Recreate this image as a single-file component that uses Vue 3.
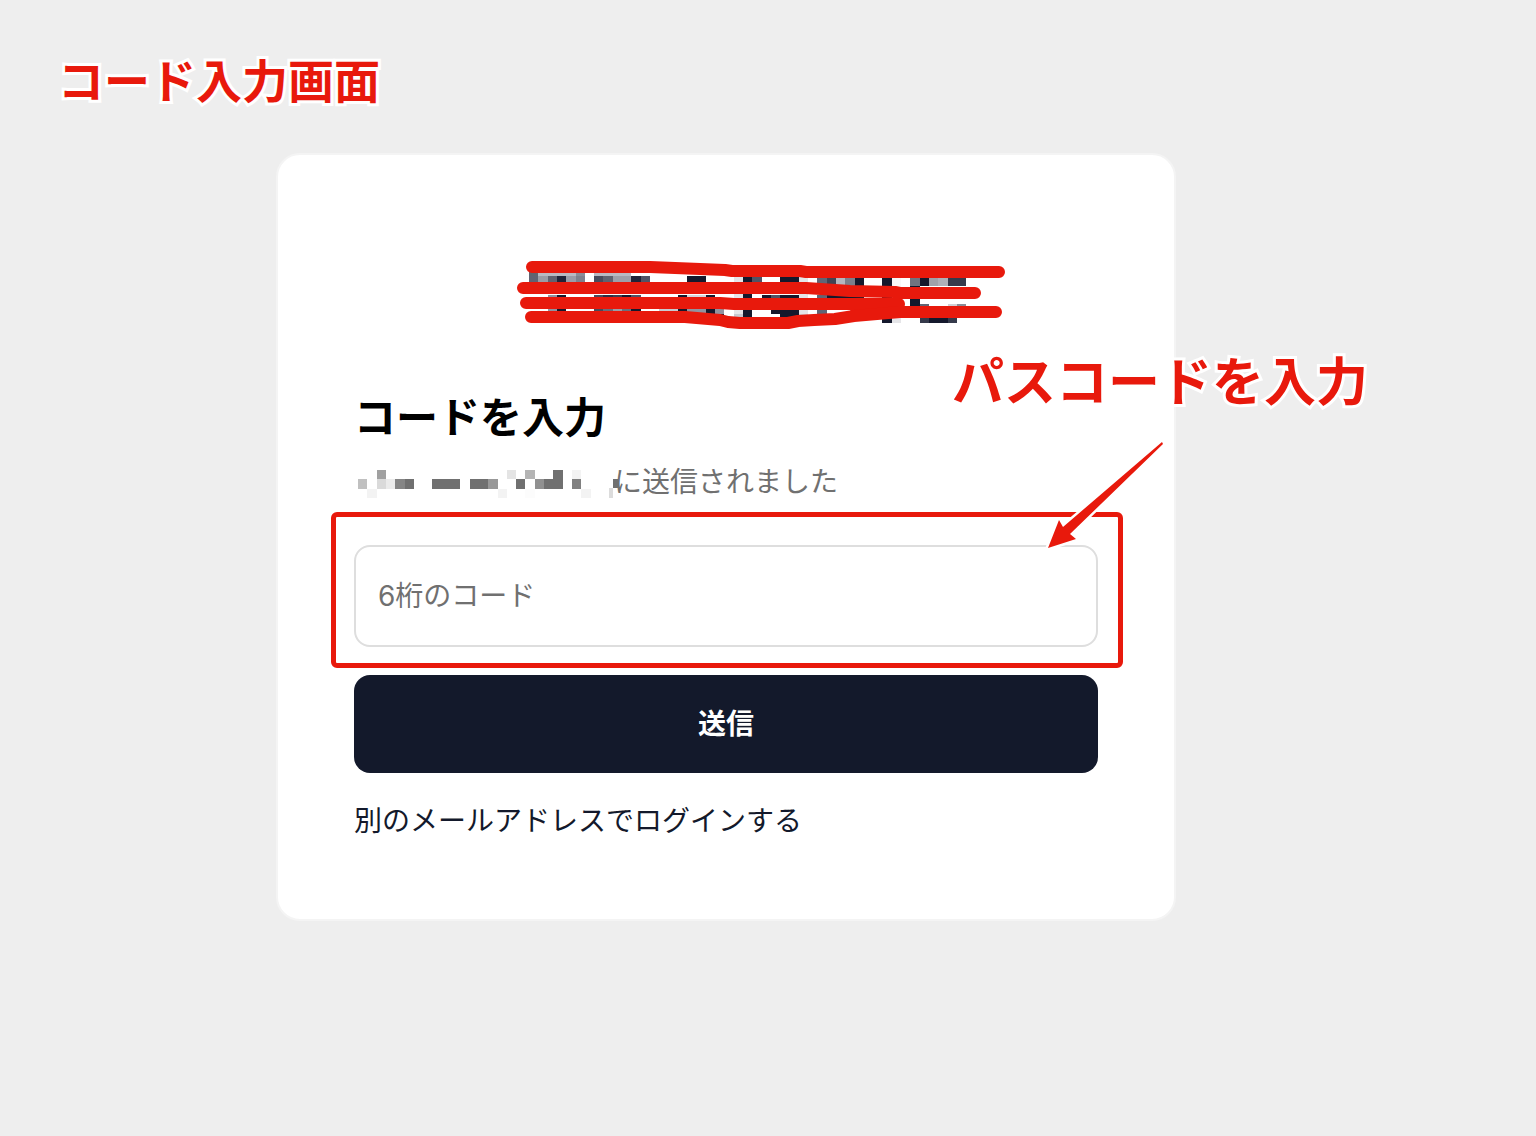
<script setup>
import { ref } from 'vue'

const code = ref('')

const N = '#14182c'

// Mosaic cells: [column, row, colour, columns wide, rows high]
const logoCells = [
  [0, 0, '#606470'], [1, 0, '#b8b9c2', 4], [5, 0, '#8b8d98'], [7, 0, '#b8b9c2', 4],
  [0, 1, '#606373'], [1, 1, '#9a9ca6'], [2, 1, '#606270'], [3, 1, '#1f2338'], [4, 1, '#9a9ca8'], [5, 1, '#7e818d'],
  [7, 1, '#474b5c'], [8, 1, '#5e6270'], [9, 1, '#9d9fa9', 2], [11, 1, '#1f2338'], [12, 1, '#505365'],
  [17, 1, N, 2], [22, 1, '#e5e5e8', 1, 4], [23, 1, N, 1, 5], [24, 1, '#505365'],
  [27, 1, N, 2], [29, 1, '#e5e5e8', 1, 4], [31, 1, '#606575'], [32, 1, '#3f4353'], [33, 1, '#b5b6be'],
  [34, 1, '#7b7f8b'], [35, 1, N], [38, 1, N, 1, 5], [39, 1, '#f8f8f8'],
  [41, 1, '#707480'], [42, 1, N], [43, 1, '#a0a2aa'], [44, 1, '#aeb0b8'], [45, 1, '#353a4b', 2],
  [2, 3, '#9093a0', 1, 2], [3, 3, N, 1, 2], [7, 3, '#474b5c', 1, 2], [8, 3, '#2b2f43'], [9, 3, '#3a3f50'],
  [10, 3, N], [11, 3, '#505365'], [16, 3, N, 1, 2], [17, 3, '#d5d6dc', 2], [19, 3, N],
  [25, 3, N], [26, 3, '#505365'], [27, 3, N, 2, 3], [31, 3, '#606575', 1, 2], [32, 3, N, 4],
  [41, 2, N, 1, 3], [8, 4, '#6a6d7b'], [9, 4, '#9a9ca6'], [10, 4, '#6a6d7b'], [11, 4, N],
  [14, 4, '#c8c9d0', 2], [17, 4, '#9093a0', 2], [19, 4, N], [20, 4, '#9093a0'], [26, 4, N],
  [42, 4, '#606575'], [45, 4, '#d0d0d5'], [46, 4, '#8a8d98'],
  [19, 5, N, 2], [22, 5, '#c8c9d0'], [29, 5, '#d0d0d5'], [39, 5, '#e5e5e8'],
  [42, 5, '#353a4b'], [43, 5, N, 2], [45, 5, '#353a4b']
]

const addressCells = [
  [2, 0, '#a0a0a0'], [16, 0, '#e4e4e4'], [18, 0, '#b4b4b4'], [21, 0, '#707070'], [23, 0, '#f3f3f3'],
  [0, 1, '#c0c0c0'], [2, 1, '#dadada'], [3, 1, '#ebebeb'], [4, 1, '#858585'], [5, 1, '#707070'],
  [8, 1, '#707070', 3], [12, 1, '#707070', 2], [14, 1, '#989898'], [17, 1, '#707070'],
  [19, 1, '#909090'], [20, 1, '#707070', 2], [23, 1, '#808080'],
  [1, 2, '#f3f3f3'], [15, 2, '#f3f3f3'], [18, 2, '#fcfcfc'], [24, 2, '#f3f3f3']
]

function toRects(cells, x0, y0) {
  const px = (n) => Math.round(n * 9.3)
  return cells.map(([c, r, fill, w = 1, h = 1]) => ({
    x: x0 + px(c),
    y: y0 + px(r),
    width: px(c + w) - px(c),
    height: px(r + h) - px(r),
    fill
  }))
}

const logoRects = toRects(logoCells, 175, 12)
const addressRects = toRects(addressCells, 4, 4)
</script>

<template>
  <main class="page">
    <h2 class="note">コード入力画面</h2>

    <section class="card">
      <svg class="logo" viewBox="0 0 744 80" shape-rendering="crispEdges" aria-hidden="true">
        <rect v-for="(r, i) in logoRects" :key="i" v-bind="r" />
        <g class="scribble" shape-rendering="auto">
          <path d="M178 12H296L371 15L378 16H446L452 17H645" />
          <path d="M169 33H452L496 36L541 37L546 38H621" />
          <path d="M172 48H366L380 49H545L500 60" />
          <path d="M177 62H331L366 65L374 67L386 68H434L444 66L460 65L481 64L500 61L546 57H642" />
        </g>
      </svg>

      <form @submit.prevent>
        <h1>コードを入力</h1>
        <p class="sent">
          <svg class="address" viewBox="0 0 260 32" shape-rendering="crispEdges" aria-hidden="true">
            <rect v-for="(r, i) in addressRects" :key="i" v-bind="r" />
            <rect x="259" y="13" width="5" height="9" fill="#707070" />
            <rect x="255" y="22" width="4" height="10" fill="#dcdcdc" />
          </svg>
          <span>に送信されました</span>
        </p>

        <div class="field">
          <input v-model="code" type="text" inputmode="numeric" maxlength="6" placeholder="6桁のコード" aria-label="6桁のコード" />
          <div class="frame"></div>
        </div>

        <button type="submit">送信</button>
      </form>
      <a href="#">別のメールアドレスでログインする</a>

      <p class="note hint">パスコードを入力</p>
      <svg class="arrow" viewBox="0 0 124 114" aria-hidden="true">
        <path d="M4 110L15 82L19 89L118 4L119 6L26 96L32 101Z" />
      </svg>
    </section>
  </main>
</template>

<style>
body {
  margin: 0;
  background: #eeeeee;
}
</style>

<style scoped>
* {
  box-sizing: border-box;
}

.page {
  padding: 49px 84px 48px 0;
  font-family: Inter, "Noto Sans CJK JP", sans-serif;
  font-size: 28px;
  line-height: 40px;
}

.note {
  margin: 0;
  color: #e8190c;
  font-weight: 700;
  -webkit-text-stroke: 6px #ffffff;
  paint-order: stroke fill;
  white-space: nowrap;
}

.page > .note {
  padding-left: 58px;
  font-size: 46px;
  line-height: 64px;
}

.card {
  position: relative;
  width: 100%;
  max-width: 900px;
  margin: 40px auto 0;
  padding: 100px 76px 78px;
  border: 2px solid #f4f4f4;
  border-radius: 24px;
  background: #ffffff;
}

.logo {
  display: block;
  width: 100%;
}

.scribble {
  fill: none;
  stroke: #e8190c;
  stroke-width: 12px;
  stroke-linecap: round;
  stroke-linejoin: round;
}

h1 {
  margin: 51px 0 12px;
  color: #000000;
  font-size: 42px;
  font-weight: 700;
  line-height: 64px;
}

.sent {
  display: flex;
  align-items: center;
  margin: 0 0 43px;
  color: #707070;
}

.address {
  flex: none;
  width: 260px;
  height: 32px;
  overflow: visible;
}

.field {
  position: relative;
}

input {
  display: block;
  width: 100%;
  height: 102px;
  padding: 0 22px;
  border: 2px solid #dedede;
  border-radius: 16px;
  outline: none;
  background: #ffffff;
  color: #14182c;
  font: inherit;
}

input::placeholder {
  color: #707070;
  opacity: 1;
}

.frame {
  position: absolute;
  inset: -33px -25px -21px -23px;
  border: 5px solid #e8190c;
  border-radius: 6px;
  pointer-events: none;
}

button {
  display: block;
  width: 100%;
  height: 98px;
  margin: 28px 0;
  border: 0;
  border-radius: 16px;
  background: #13192b;
  color: #ffffff;
  font: inherit;
  font-weight: 700;
}

a {
  display: block;
  color: #13192b;
  text-decoration: none;
}

.hint {
  position: absolute;
  top: 192px;
  right: -194px;
  font-size: 52px;
  line-height: 72px;
}

.arrow {
  position: absolute;
  top: 283px;
  right: 6px;
  width: 124px;
  height: 114px;
  fill: #e8190c;
  stroke: #ffffff;
  stroke-width: 5px;
  stroke-linejoin: round;
  paint-order: stroke;
  pointer-events: none;
}
</style>
